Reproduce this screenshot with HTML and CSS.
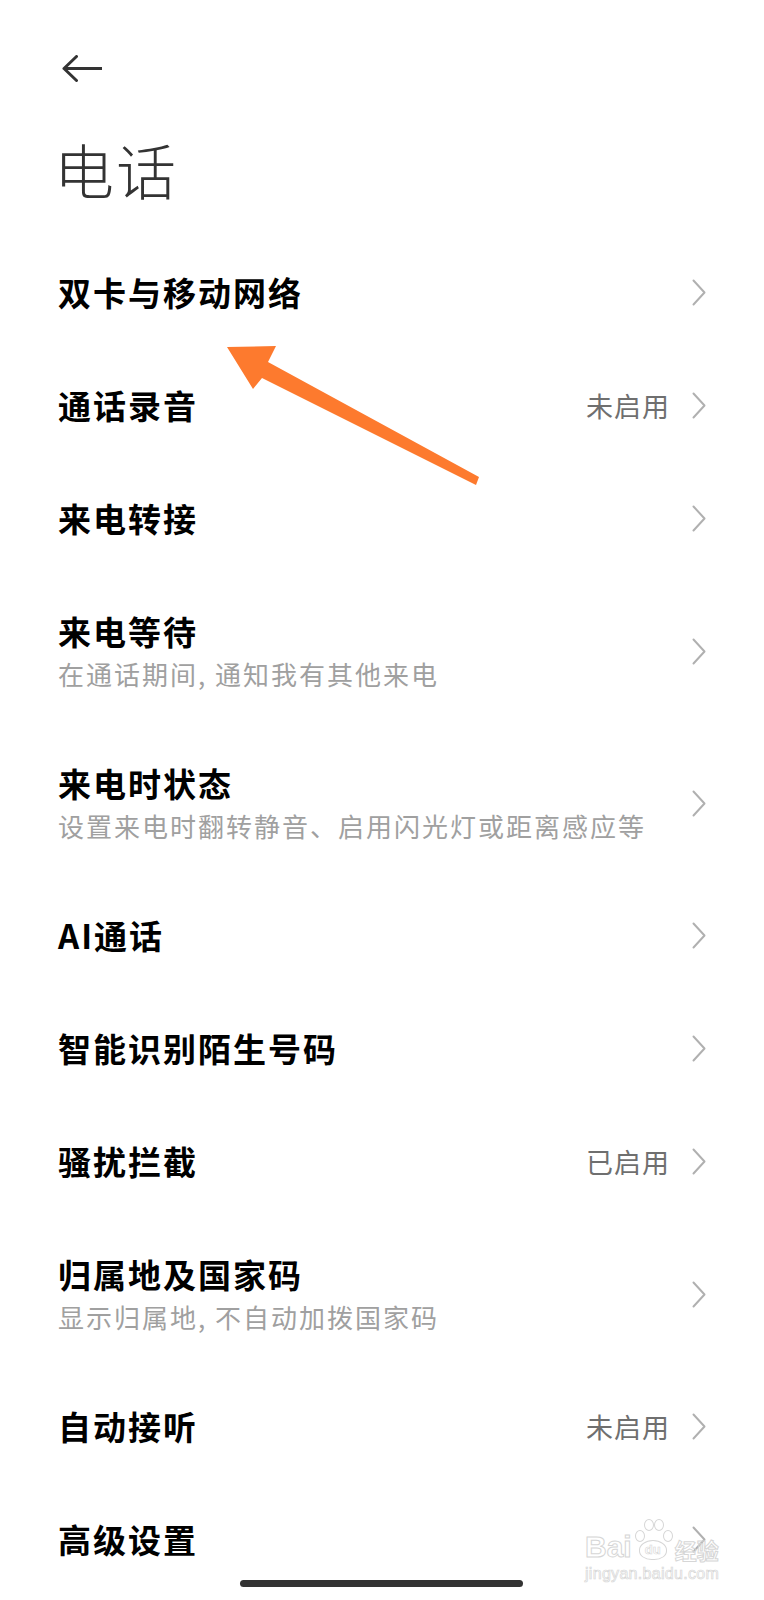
FILE: index.html
```html
<!DOCTYPE html>
<html lang="zh-CN">
<head>
    <meta charset="UTF-8">
    <meta name="viewport" content="width=device-width, initial-scale=1.0">
    <title>电话</title>
    <link rel="stylesheet" href="styles.css">
</head>
<body>
    <div class="page">
        <div class="topbar">
            <svg class="back" viewBox="0 0 40 27" xmlns="http://www.w3.org/2000/svg">
                <path d="M2 13.5H40M14.5 1.5L2 13.5L14.5 25.5"/>
            </svg>
        </div>
        <h1 class="title">电话</h1>

        <div class="list">
            <div class="row">
                <div class="text"><div class="label">双卡与移动网络</div></div>
                <svg class="chev" viewBox="0 0 14 27"><path d="M1.5 1.5L12.5 13.5L1.5 25.5"/></svg>
            </div>
            <div class="row">
                <div class="text"><div class="label">通话录音</div></div>
                <span class="value">未启用</span>
                <svg class="chev" viewBox="0 0 14 27"><path d="M1.5 1.5L12.5 13.5L1.5 25.5"/></svg>
            </div>
            <div class="row">
                <div class="text"><div class="label">来电转接</div></div>
                <svg class="chev" viewBox="0 0 14 27"><path d="M1.5 1.5L12.5 13.5L1.5 25.5"/></svg>
            </div>
            <div class="row two">
                <div class="text">
                    <div class="label">来电等待</div>
                    <div class="desc">在通话期间, 通知我有其他来电</div>
                </div>
                <svg class="chev" viewBox="0 0 14 27"><path d="M1.5 1.5L12.5 13.5L1.5 25.5"/></svg>
            </div>
            <div class="row two">
                <div class="text">
                    <div class="label">来电时状态</div>
                    <div class="desc">设置来电时翻转静音、启用闪光灯或距离感应等</div>
                </div>
                <svg class="chev" viewBox="0 0 14 27"><path d="M1.5 1.5L12.5 13.5L1.5 25.5"/></svg>
            </div>
            <div class="row">
                <div class="text"><div class="label">AI通话</div></div>
                <svg class="chev" viewBox="0 0 14 27"><path d="M1.5 1.5L12.5 13.5L1.5 25.5"/></svg>
            </div>
            <div class="row">
                <div class="text"><div class="label">智能识别陌生号码</div></div>
                <svg class="chev" viewBox="0 0 14 27"><path d="M1.5 1.5L12.5 13.5L1.5 25.5"/></svg>
            </div>
            <div class="row">
                <div class="text"><div class="label">骚扰拦截</div></div>
                <span class="value">已启用</span>
                <svg class="chev" viewBox="0 0 14 27"><path d="M1.5 1.5L12.5 13.5L1.5 25.5"/></svg>
            </div>
            <div class="row two">
                <div class="text">
                    <div class="label">归属地及国家码</div>
                    <div class="desc">显示归属地, 不自动加拨国家码</div>
                </div>
                <svg class="chev" viewBox="0 0 14 27"><path d="M1.5 1.5L12.5 13.5L1.5 25.5"/></svg>
            </div>
            <div class="row">
                <div class="text"><div class="label">自动接听</div></div>
                <span class="value">未启用</span>
                <svg class="chev" viewBox="0 0 14 27"><path d="M1.5 1.5L12.5 13.5L1.5 25.5"/></svg>
            </div>
            <div class="row">
                <div class="text"><div class="label">高级设置</div></div>
                <svg class="chev" viewBox="0 0 14 27"><path d="M1.5 1.5L12.5 13.5L1.5 25.5"/></svg>
            </div>
        </div>
    </div>

    <!-- system gesture bar, sits over the last row -->
    <div class="home-bar"></div>

    <!-- annotation arrow drawn over the screenshot -->
    <svg class="pointer" viewBox="0 0 270 150" xmlns="http://www.w3.org/2000/svg">
        <polygon points="7,7 56,6 48,22 259,137 256,145 42,38 33,49"/>
    </svg>

    <div class="watermark">
        <div class="wm-logo">
            <span>Bai</span>
            <span class="paw">
                <i class="toe t1"></i><i class="toe t2"></i><i class="toe t3"></i><i class="toe t4"></i>
                <i class="pad">du</i>
            </span>
            <span class="wm-cn">经验</span>
        </div>
        <div class="wm-url">jingyan.baidu.com</div>
    </div>
</body>
</html>
```

FILE: styles.css
```css
* {
    box-sizing: border-box;
}

body {
    margin: 0;
    background: #fff;
    font-family: "Noto Sans CJK SC", "Noto Sans", sans-serif;
    color: #000;
    position: relative;
    min-height: 1600px;
}

.page {
    padding: 0 58px;
}

.topbar {
    padding-top: 55px;
    height: 82px;
}

.back {
    display: block;
    width: 40px;
    height: 27px;
    margin-left: 4px;
    fill: none;
    stroke: #333;
    stroke-width: 3;
    stroke-linecap: round;
    stroke-linejoin: round;
}

.title {
    margin: 51px 0 0 -4px;
    font-size: 60px;
    line-height: 72px;
    font-weight: 300;
    letter-spacing: 2px;
    color: #333;
}

.list {
    margin-top: 31px;
}

.row {
    display: flex;
    align-items: center;
    height: 113px;
}

.row.two {
    height: 152px;
}

.text {
    flex: 1;
    min-width: 0;
}

.label {
    font-size: 33px;
    line-height: 45px;
    font-weight: 600;
    letter-spacing: 2px;
    color: #000;
}

.desc {
    margin-top: 1px;
    font-size: 26px;
    line-height: 38px;
    letter-spacing: 2px;
    color: #a0a0a0;
}

.value {
    margin-right: 22px;
    font-size: 27px;
    letter-spacing: 1px;
    color: #6f6f6f;
}

.chev {
    flex: none;
    width: 14px;
    height: 27px;
    fill: none;
    stroke: #b0b0b0;
    stroke-width: 2;
    stroke-linecap: round;
    stroke-linejoin: round;
}

.home-bar {
    position: absolute;
    left: 240px;
    top: 1580px;
    width: 283px;
    height: 7px;
    border-radius: 4px;
    background: #333;
}

.pointer {
    position: absolute;
    left: 220px;
    top: 340px;
    width: 270px;
    height: 150px;
    fill: #fd7a2e;
}

.watermark {
    position: absolute;
    left: 585px;
    top: 1516px;
    width: 136px;
    color: transparent;
    -webkit-text-stroke: 1px #d6d6d6;
    font-family: "Liberation Sans", Arial, sans-serif;
}

.wm-logo {
    display: flex;
    align-items: flex-end;
    height: 46px;
}

.wm-logo span {
    font-size: 30px;
    line-height: 30px;
    font-weight: 700;
}

.wm-cn {
    font-family: "Noto Sans CJK SC", sans-serif;
    font-size: 22px !important;
    line-height: 26px !important;
    margin-left: 1px;
}

.paw {
    position: relative;
    width: 42px;
    height: 46px;
}

.toe {
    position: absolute;
    width: 10px;
    height: 12px;
    border: 1px solid #d6d6d6;
    border-radius: 50%;
}

.t1 { left: 3px; top: 14px; }
.t2 { left: 12px; top: 3px; }
.t3 { left: 22px; top: 3px; }
.t4 { left: 31px; top: 14px; }

.pad {
    position: absolute;
    left: 7px;
    top: 24px;
    width: 28px;
    height: 20px;
    border: 1px solid #d6d6d6;
    border-radius: 50% 50% 45% 45%;
    font-style: normal;
    font-size: 13px;
    line-height: 18px;
    text-align: center;
    -webkit-text-stroke: 0.6px #d6d6d6;
}

.wm-url {
    margin-top: 3px;
    font-size: 16px;
    line-height: 18px;
    letter-spacing: 0.3px;
    -webkit-text-stroke: 0.7px #d6d6d6;
}
```
